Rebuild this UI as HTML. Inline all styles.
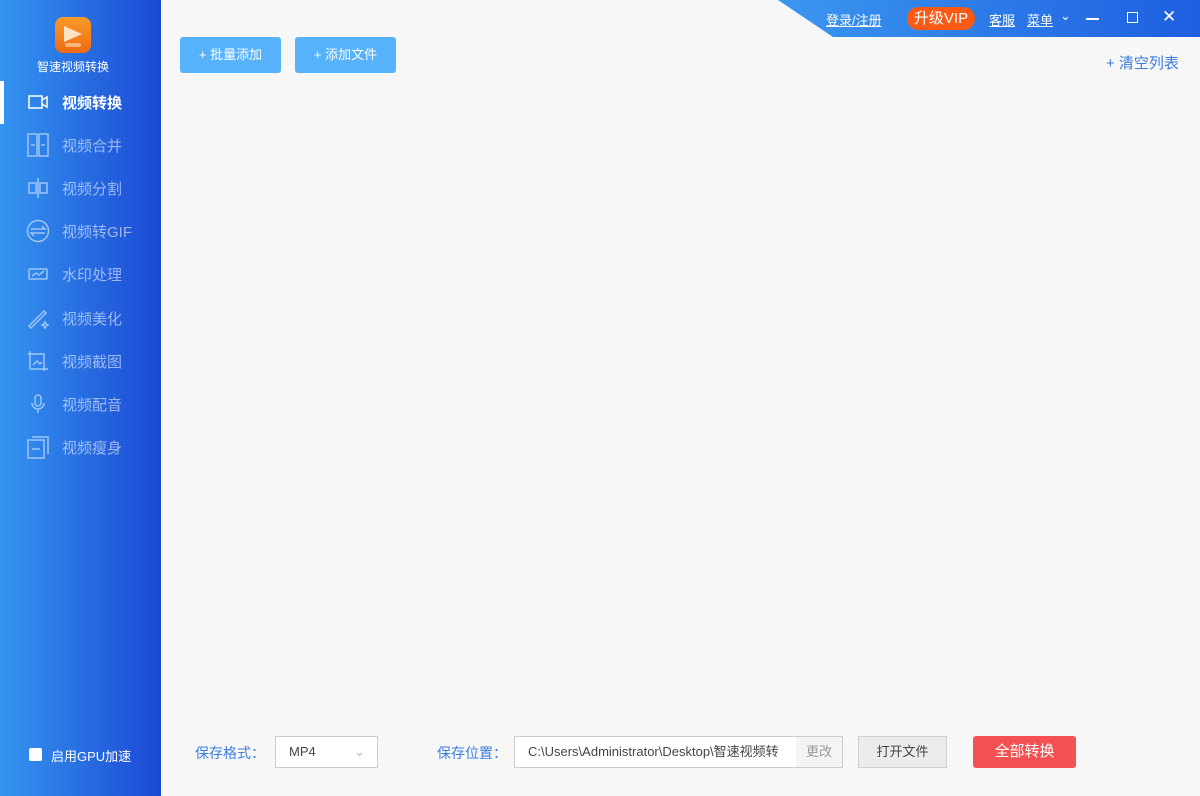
<!DOCTYPE html><html><head><meta charset="utf-8"><style>
*{margin:0;padding:0;box-sizing:border-box}
body{width:1200px;height:796px;background:#f7f7f7;font-family:"Liberation Sans","Noto Sans CJK SC",sans-serif;position:relative;overflow:hidden}
.side{position:absolute;left:0;top:0;width:161px;height:796px;background:linear-gradient(90deg,#3595f0,#1b48d4)}
.logo{position:absolute;left:55px;top:17px;width:36px;height:36px;border-radius:8px;background:linear-gradient(#f89b2a,#f06a12)}
.lt{position:absolute;left:0;width:146px;top:58px;text-align:center;color:#fff;font-size:12px}
.item{position:absolute;left:26px;height:24px;color:rgba(255,255,255,.55);font-size:15px;display:flex;align-items:center}
.item svg{width:24px;height:24px;margin-right:12px}
.item.on{color:#fff;font-weight:bold}
.bar{position:absolute;left:0;top:81px;width:4px;height:43px;background:#fff}
.top{position:absolute;left:778px;top:0;width:422px;height:37px;background:linear-gradient(90deg,#3b97ef,#1e5ee0);clip-path:polygon(0 0,100% 0,100% 100%,55px 100%)}
.top span{position:absolute;color:#fff;font-size:13px;top:10px;text-decoration:underline}
.vip{position:absolute;left:907px;top:7px;width:68px;height:23px;border-radius:12px;background:#fa5a14;color:#fff;font-size:15px;text-align:center;line-height:23px}
.btn{position:absolute;top:37px;height:36px;border-radius:3px;background:#55b2fb;color:#fff;font-size:13px;text-align:center;line-height:36px}
.lab{position:absolute;top:743px;color:#3d7de0;font-size:14px}
</style></head><body>
<div class="side">
<div class="logo"><svg width="36" height="36"><path d="M9 9 L27 17 L9 25Z" fill="#fde1c4"/><rect x="10" y="26" width="16" height="4" rx="2" fill="#fbb57c"/></svg></div>
<div class="lt">智速视频转换</div>
<div class="bar"></div>
<div class="item on" style="top:90px"><svg viewBox="0 0 24 24" fill="none" stroke="#fff" stroke-width="1.5"><rect x="3" y="6" width="13" height="12"/><path d="M16 10l5-3v10l-5-3"/></svg>视频转换</div>
<div class="item" style="top:133px"><svg viewBox="0 0 24 24" fill="none" stroke="#9cc6f6" stroke-width="1.5"><rect x="2" y="1" width="9" height="22"/><rect x="13" y="1" width="9" height="22"/><path d="M5 12h4M15 12h4"/></svg>视频合并</div>
<div class="item" style="top:176px"><svg viewBox="0 0 24 24" fill="none" stroke="#9cc6f6" stroke-width="1.5"><rect x="3" y="7" width="7" height="10"/><rect x="14" y="7" width="7" height="10"/><path d="M12 2v20"/></svg>视频分割</div>
<div class="item" style="top:219px"><svg viewBox="0 0 24 24" fill="none" stroke="#9cc6f6" stroke-width="1.5"><circle cx="12" cy="12" r="10.5"/><path d="M5 10h14l-3-3M19 14H5l3 3"/></svg>视频转GIF</div>
<div class="item" style="top:262px"><svg viewBox="0 0 24 24" fill="none" stroke="#9cc6f6" stroke-width="1.5"><rect x="3" y="7" width="18" height="10" rx="1"/><path d="M6 14l4-3 3 2 5-4"/></svg>水印处理</div>
<div class="item" style="top:306px"><svg viewBox="0 0 24 24" fill="none" stroke="#9cc6f6" stroke-width="1.5"><path d="M3 20L18 5l2 2L5 22z"/><path d="M19 16l1 2 2 1-2 1-1 2-1-2-2-1 2-1z"/></svg>视频美化</div>
<div class="item" style="top:349px"><svg viewBox="0 0 24 24" fill="none" stroke="#9cc6f6" stroke-width="1.5"><path d="M4 2v18h18M2 5h16v17"/><path d="M7 16l4-4 3 3 2-2"/></svg>视频截图</div>
<div class="item" style="top:392px"><svg viewBox="0 0 24 24" fill="none" stroke="#9cc6f6" stroke-width="1.5"><rect x="9" y="3" width="6" height="11" rx="3"/><path d="M6 11a6 6 0 0012 0M12 17v4"/></svg>视频配音</div>
<div class="item" style="top:435px"><svg viewBox="0 0 24 24" fill="none" stroke="#9cc6f6" stroke-width="1.5"><rect x="2" y="5" width="16" height="18"/><path d="M6 2h16v17M6 14h8"/></svg>视频瘦身</div>
<div style="position:absolute;left:29px;top:748px;width:13px;height:13px;background:#fff;border-radius:2px"></div>
<div style="position:absolute;left:51px;top:746px;color:#fff;font-size:13px">启用GPU加速</div>
</div>
<div class="top"></div>
<div class="top" style="background:none;clip-path:none">
<span style="left:48px">登录/注册</span><span style="left:211px">客服</span><span style="left:249px">菜单</span>
<span style="left:282px;text-decoration:none;top:8px">⌄</span>
<div style="position:absolute;left:308px;top:18px;width:13px;height:1.5px;background:#fff"></div>
<div style="position:absolute;left:349px;top:12px;width:11px;height:11px;border:1.5px solid #fff"></div>
<span style="left:384px;text-decoration:none;top:7px;font-size:17px">✕</span>
</div>
<div class="vip">升级VIP</div>
<div class="btn" style="left:180px;width:101px">+ 批量添加</div>
<div class="btn" style="left:295px;width:101px">+ 添加文件</div>
<div style="position:absolute;left:1106px;top:52px;color:#3d7de0;font-size:15px">+ 清空列表</div>
<div class="lab" style="left:195px">保存格式：</div>
<div style="position:absolute;left:275px;top:736px;width:103px;height:32px;background:#fff;border:1px solid #ccc;font-size:13px;color:#444;line-height:30px;padding-left:13px">MP4<span style="position:absolute;left:78px;color:#bbb">⌄</span></div>
<div class="lab" style="left:437px">保存位置：</div>
<div style="position:absolute;left:514px;top:736px;width:329px;height:32px;background:#fff;border:1px solid #ccc;font-size:13px;color:#444;line-height:30px;padding-left:13px;overflow:hidden">C:\Users\Administrator\Desktop\智速视频转<div style="position:absolute;right:0;top:0;width:46px;height:30px;background:#f4f4f4;color:#999;text-align:center">更改</div></div>
<div style="position:absolute;left:858px;top:736px;width:89px;height:32px;background:#ececec;border:1px solid #d0d0d0;font-size:13px;color:#444;text-align:center;line-height:30px">打开文件</div>
<div style="position:absolute;left:973px;top:736px;width:103px;height:32px;background:#f45252;border-radius:3px;font-size:15px;color:#fff;text-align:center;line-height:32px">全部转换</div>
</body></html>
